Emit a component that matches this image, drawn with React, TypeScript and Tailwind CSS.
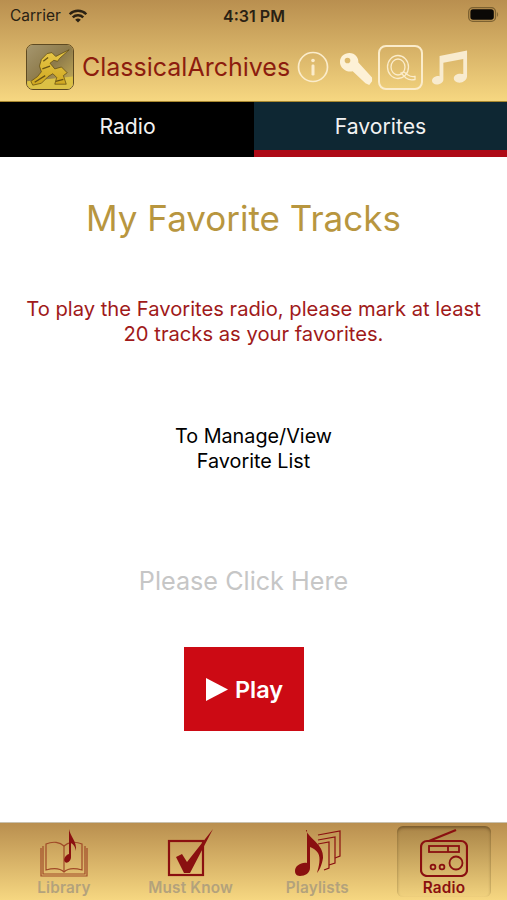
function Wifi() {
  return (
    <svg width="20" height="14" viewBox="0 0 22 16" className="text-[#2a2113]">
      <path d="M1.5 6 A13.5 13.5 0 0 1 20.5 6" fill="none" stroke="currentColor" strokeWidth="2.8" />
      <path d="M5 9.5 A8.6 8.6 0 0 1 17 9.5" fill="none" stroke="currentColor" strokeWidth="2.8" />
      <path d="M11 15.5 L7.8 12.3 A4.6 4.6 0 0 1 14.2 12.3 Z" fill="currentColor" />
    </svg>
  );
}

function Battery() {
  return (
    <svg width="33" height="15" viewBox="0 0 33 16" className="mb-[2px]">
      <rect x="0.7" y="0.7" width="28.6" height="14.6" rx="4.5" fill="none" stroke="#7c6131" strokeWidth="1.4" />
      <rect x="2.5" y="2.5" width="25" height="11" rx="2.8" fill="#0b0906" />
      <path d="M31 5.5 C32.4 6 32.4 10 31 10.5 Z" fill="#7c6131" />
    </svg>
  );
}

function Unicorn() {
  return (
    <svg width="48" height="46" viewBox="0 0 48 46" className="rounded-[7px] border border-[#5e4a22]">
      <defs>
        <linearGradient id="lg" x1="0" y1="0" x2="1" y2="1">
          <stop offset="0" stopColor="#a5966e" />
          <stop offset="0.5" stopColor="#8d7a4a" />
          <stop offset="1" stopColor="#cbb25a" />
        </linearGradient>
        <linearGradient id="lb" x1="0" y1="0" x2="0" y2="1">
          <stop offset="0" stopColor="#e9c94a" />
          <stop offset="1" stopColor="#cfa720" />
        </linearGradient>
      </defs>
      <rect width="48" height="46" fill="url(#lg)" />
      <path d="M0 38 L48 33 L48 46 L0 46 Z" fill="#dcc145" />
      <path d="M44 5 L30 12 L26 8 L21 9 L15 15 L13 22 L15 28 L11 33 L4 38 L6 42 L15 40 L22 33 L27 30 L31 34 L29 41 L41 41 L38 32 L42 29 L36 23 L29 25 L24 19 L28 16 L32 17 L34 14 Z" fill="url(#lb)" stroke="#57440f" strokeWidth="0.7" />
      <path d="M17 17 L22 13 M16 25 L24 22 M8 39 L19 32 M30 38 L38 36" stroke="#6b5414" strokeWidth="1.4" fill="none" />
    </svg>
  );
}

function Info() {
  return (
    <svg width="32" height="32" viewBox="0 0 32 32" className="text-[#fbeccb]">
      <circle cx="16" cy="16" r="14.5" fill="none" stroke="currentColor" strokeWidth="1.7" />
      <circle cx="16" cy="9.5" r="1.8" fill="currentColor" />
      <rect x="14.5" y="13.5" width="3" height="11" rx="1.2" fill="currentColor" />
    </svg>
  );
}

function KeyIcon() {
  return (
    <svg width="34" height="34" viewBox="0 0 36 36" className="text-[#fdf1d6]">
      <path fillRule="evenodd" d="M11 1 C17 1 21 6 20.5 11 L35 27 L35 31 L32 35 L28 33 L14.5 20.5 C8 22 1 17 1 10.5 C1 5 5.5 1 11 1 Z M9 6 A3 3 0 1 0 9 12 A3 3 0 1 0 9 6 Z" fill="currentColor" />
    </svg>
  );
}

function QBox() {
  return (
    <div className="flex h-[45px] w-[45px] items-center justify-center rounded-[8px] border-2 border-[#fbeccb]">
      <svg width="34" height="34" viewBox="0 0 34 34" fill="none" stroke="#fbeccb" strokeWidth="1.3">
        <ellipse cx="14" cy="17" rx="10.5" ry="11.5" />
        <ellipse cx="14" cy="17" rx="7" ry="8" />
        <path d="M17 23 L20 22 L24 25 C26 26.5 28 27 31 26.5 L31 29.5 C27 30.5 24 29.5 22 28 Z" />
      </svg>
    </div>
  );
}

function Note() {
  return (
    <svg width="36" height="36" viewBox="0 0 38 37" className="text-[#f8ebcf]">
      <path d="M8 7 L37 1 L37 28 C37 32 33 35 29 35 C25 35 23 33 23 30.5 C23 27.5 26 25.5 30 25.5 C31 25.5 32 25.7 33 26 L33 10 L12 14 L12 32 C12 35 8 37 5 37 C2 37 0 35 0 33 C0 30 3.5 28 7 28 L8 28.2 Z" fill="currentColor" />
    </svg>
  );
}

function BookIcon() {
  return (
    <svg width="50" height="48" viewBox="0 0 50 48" className="text-[#a04a28]">
      <g fill="none" stroke="currentColor" strokeWidth="1.2">
        <path d="M7 15 C14 12 21 13 25 17 C29 13 36 12 43 15 L43 41 C36 39 29 39 25 43 C21 39 14 39 7 41 Z" />
        <path d="M25 17 L25 43" />
        <path d="M4 17 L4 45 L46 45 L46 17" />
        <path d="M2 19 L2 47 L48 47 L48 19" />
      </g>
      <path d="M30 0 C31 7 38 12 37 22 C36 17 34 15 32 14 L32 28 C32 32 28 35 26 33 C24 31 26 26 30 25 Z" fill="#8a1010" />
    </svg>
  );
}

function CheckIcon() {
  return (
    <svg width="48" height="48" viewBox="0 0 48 48">
      <rect x="2" y="12" width="34" height="34" fill="none" stroke="#8a1010" strokeWidth="2.2" />
      <path d="M9 28 L15 25 L20 33 L46 0 L23 44 L17 44 Z" fill="#8a1010" />
    </svg>
  );
}

function PlaylistIcon() {
  return (
    <svg width="48" height="47" viewBox="0 0 48 47">
      <g fill="none" stroke="#8a1010" strokeWidth="1.2">
        <path d="M25 5 L47 1 L47 26 L42 28" />
        <path d="M25 10 L42 7 L42 33 L36 35" />
        <path d="M25 14 L36 12 L36 38 L31 40" />
      </g>
      <path d="M13 0 C15 8 31 14 30 28 C29 35 26 41 24 43 C26 36 28 28 25 23 C23 20 20 18 17 17 L17 38 C17 43 12 46 7 46 C3 46 2 43 2 41 C2 36 8 32 14 33 L14 0 Z" fill="#8a1010" />
    </svg>
  );
}

function RadioIcon() {
  return (
    <svg width="48" height="49" viewBox="0 0 48 49" fill="none" stroke="#8a1010" strokeWidth="2.2">
      <path d="M9 13 L36 2" />
      <rect x="1" y="13" width="46" height="35" rx="6" />
      <rect x="9" y="18" width="30" height="6" strokeWidth="1.8" />
      <path d="M28 18 L28 24" strokeWidth="1.8" />
      <circle cx="13" cy="39" r="2.4" strokeWidth="1.8" />
      <circle cx="22" cy="39" r="2.4" strokeWidth="1.8" />
      <circle cx="36" cy="35" r="6.5" strokeWidth="1.8" />
    </svg>
  );
}

function Tab({ label, icon, active }: { label: string; icon: React.ReactNode; active?: boolean }) {
  return (
    <div
      className={
        "flex h-[71px] w-[94px] flex-col items-center justify-end rounded-[6px] " +
        (active ? "bg-gradient-to-b from-[#a98447] to-[#f1d27e] shadow-[inset_0_2px_3px_rgba(60,40,10,0.45)]" : "")
      }
    >
      <div className="pb-[2px]">{icon}</div>
      <span className={"text-[15.3px] leading-[18px] font-semibold tracking-[0.2px] " + (active ? "text-[#8a1010]" : "text-[#b3a27c]")}>{label}</span>
    </div>
  );
}

export default function App() {
  return (
    <div className="flex h-[900px] w-[507px] flex-col overflow-hidden bg-white font-['Inter','Liberation_Sans',sans-serif] antialiased">
      <header className="h-[102px] border-b border-[#a8882f] bg-gradient-to-b from-[#b98f4f] to-[#f6d781]">
        <div className="grid h-[30px] grid-cols-3 items-center pt-[1px] pr-[7px] pl-[10px] text-[#2a2113]">
          <div className="flex items-center gap-[7px]">
            <span className="text-[15.5px]">Carrier</span>
            <Wifi />
          </div>
          <span className="ml-[-2px] text-center text-[16px] font-semibold">4:31 PM</span>
          <div className="flex justify-end"><Battery /></div>
        </div>
        <div className="flex h-[71px] items-center pt-[3px] pl-[26px]">
          <Unicorn />
          <span className="ml-[8px] text-[25px] leading-none text-[#8c1c0e]">ClassicalArchives</span>
          <div className="ml-[7px]"><Info /></div>
          <div className="ml-[10px] mt-[4px]"><KeyIcon /></div>
          <div className="ml-[5px]"><QBox /></div>
          <div className="ml-[9px]"><Note /></div>
        </div>
      </header>

      <nav className="flex h-[55px] text-[21.2px] text-[#f2f2f2]">
        <div className="flex w-[254px] items-center justify-center bg-black pb-[5px] pl-[1px]">Radio</div>
        <div className="flex w-[253px] items-center justify-center border-b-[7px] border-[#ae0a16] bg-[#0e2733] pt-[1px]">Favorites</div>
      </nav>

      <main className="flex flex-1 flex-col">
        <h1 className="mt-[38px] w-[487px] text-center text-[35px] leading-[46px] font-normal text-[#b8963f]">My Favorite Tracks</h1>
        <p className="mt-[55px] text-center text-[20.2px] leading-[25px] text-[#a01a1a]">
          To play the Favorites radio, please mark at least
          <br />
          20 tracks as your favorites.
        </p>
        <p className="mt-[78px] text-center text-[19.8px] leading-[25px] text-black">
          To Manage/View
          <br />
          Favorite List
        </p>
        <p className="mt-[90px] w-[487px] text-center text-[25.2px] leading-[34px] text-[#c6c6c6]">Please Click Here</p>
        <div className="mt-[49px] ml-[184px] flex h-[84px] w-[120px] items-center justify-center gap-[6px] bg-[#cc0a14]">
          <svg width="24" height="25" viewBox="0 0 24 25"><path d="M1 1 L23 12.5 L1 24 Z" fill="#fff" /></svg>
          <span className="pt-[2px] text-[23.5px] font-semibold text-white">Play</span>
        </div>
      </main>

      <footer className="flex h-[78px] items-center justify-between border-t border-[#c9c1ae] bg-gradient-to-b from-[#b98f4f] to-[#f6d781] pr-[16px] pl-[17px]">
        <Tab label="Library" icon={<BookIcon />} />
        <Tab label="Must Know" icon={<CheckIcon />} />
        <Tab label="Playlists" icon={<PlaylistIcon />} />
        <Tab label="Radio" icon={<RadioIcon />} active />
      </footer>
    </div>
  );
}
